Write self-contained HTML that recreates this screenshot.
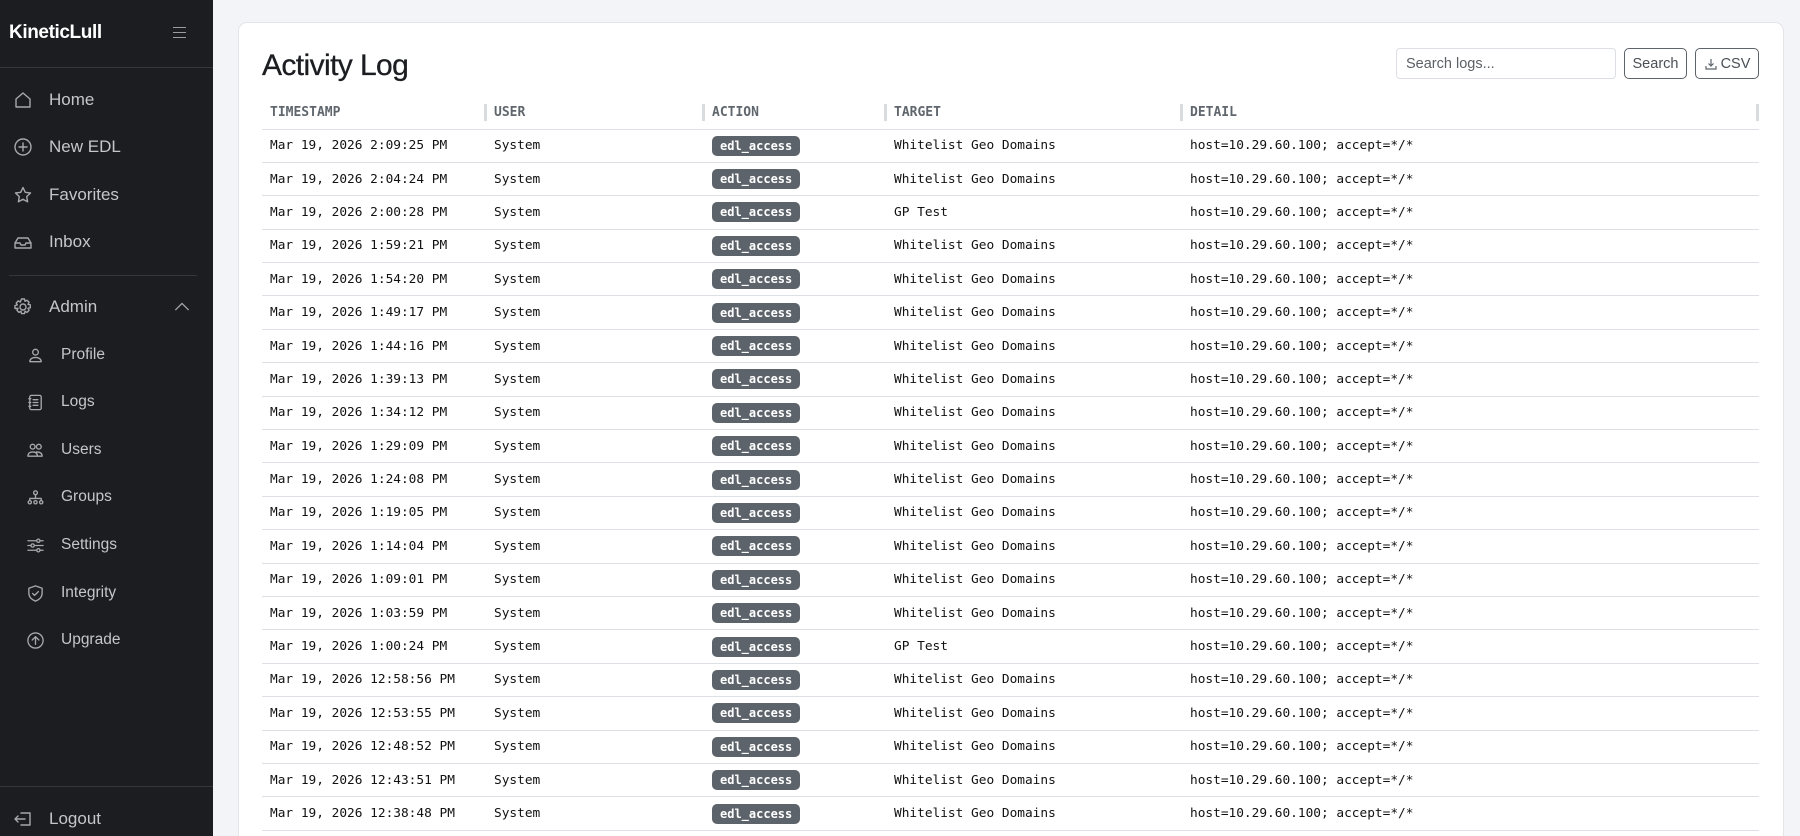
<!DOCTYPE html>
<html><head><meta charset="utf-8"><style>
*{box-sizing:border-box;margin:0;padding:0}
html{width:1800px;height:836px;overflow:hidden}
body{width:1800px;height:836px;overflow:hidden;background:#f3f4f8;font-family:"Liberation Sans",sans-serif;position:relative}
.sb{position:absolute;left:0;top:0;width:213px;height:836px;background:#1b1d21;color:#c4c6ca}
.brand{position:absolute;left:9px;top:22px;color:#fff;font-weight:bold;font-size:19px;letter-spacing:-0.4px}
.ham{position:absolute;left:173px;top:27px;width:13px;height:11px;border-top:1.5px solid #9a9ca0;border-bottom:1.5px solid #9a9ca0}
.ham:after{content:"";position:absolute;left:0;right:0;top:3.5px;border-top:1.5px solid #9a9ca0}
.hr{position:absolute;left:0;width:213px;border-top:1px solid #33363b}
.it{position:absolute;left:0;height:24px;display:flex;align-items:center;font-size:17px;color:#c4c6ca}
.it svg{position:absolute;fill:none;stroke:#a6a8ac;stroke-width:1.4;stroke-linecap:round;stroke-linejoin:round}
.it span{position:absolute;white-space:nowrap}
.m svg{left:13px;width:20px;height:20px}.m span{left:49px}
.s{font-size:15.5px}.s svg{left:26px;width:19px;height:19px}.s span{left:61px}
.card{position:absolute;left:238px;top:22px;width:1546px;height:840px;background:#fff;border:1px solid #e3e5e9;border-radius:9px}
h1{position:absolute;left:262px;top:49px;font-size:30px;font-weight:normal;color:#1b1d21;letter-spacing:-0.6px;-webkit-text-stroke:0.3px #1b1d21}
.inp{position:absolute;left:1396px;top:48px;width:220px;height:31px;border:1px solid #dcdfe3;border-radius:4px;font-size:14.5px;color:#5c6166;padding:7px 9px}
.btn{position:absolute;top:48px;height:31px;border:1px solid #5c636a;border-radius:5px;font-size:14.5px;color:#4a5056;display:flex;align-items:center;justify-content:center}
table{position:absolute;left:262px;top:97px;width:1497px;border-collapse:collapse;font-family:"DejaVu Sans Mono","Liberation Mono",monospace;font-size:12.8px;color:#111}
th{height:32px;text-align:left;font-weight:bold;color:#5f666d;padding-left:8px;border-bottom:1.5px solid #dde0e4;position:relative;font-size:13px}
th i{position:absolute;left:-2px;top:7px;height:17px;border-left:3px solid #d9dcdf}
td{height:33.4px;padding-left:8px;border-bottom:1px solid #dde0e4;white-space:nowrap}
.b{display:inline-block;background:#5c636a;color:#fff;font-weight:bold;font-size:12px;border-radius:5px;padding:3px 8px 3px;line-height:14px}
</style></head><body>
<div class="sb">
<div class="brand">KineticLull</div><div class="ham"></div>
<div class="hr" style="top:67px"></div>
<div class="it m" style="top:88px"><svg viewBox="0 0 20 20"><path d="M3 9 L10 3 L17 9 V17 H3 Z"/></svg><span>Home</span></div>
<div class="it m" style="top:135px"><svg viewBox="0 0 20 20"><circle cx="10" cy="10" r="8"/><path d="M10 6v8M6 10h8"/></svg><span>New EDL</span></div>
<div class="it m" style="top:183px"><svg viewBox="0 0 20 20"><path d="M10 2.5l2.3 4.8 5.2.7-3.8 3.6.9 5.2L10 14.3l-4.6 2.5.9-5.2L2.5 8l5.2-.7z"/></svg><span>Favorites</span></div>
<div class="it m" style="top:230px"><svg viewBox="0 0 20 20"><path d="M2 11l3-5h10l3 5v5H2z M2 11h5l1 2h4l1-2h5"/></svg><span>Inbox</span></div>
<div class="hr" style="top:275px;left:9px;width:188px"></div>
<div class="it m" style="top:295px"><svg viewBox="0 0 20 20"><circle cx="10" cy="10" r="3"/><path d="M8.5 2h3l.5 2.3 2-1.1 2.1 2.1-1.1 2 2.3.5v3l-2.3.5 1.1 2-2.1 2.1-2-1.1-.5 2.3h-3l-.5-2.3-2 1.1-2.1-2.1 1.1-2L2 11.5v-3l2.3-.5-1.1-2 2.1-2.1 2 1.1z"/></svg><span>Admin</span><svg viewBox="0 0 20 20" style="left:173px;width:18px;height:18px"><path d="M3 13l7-7 7 7"/></svg></div>
<div class="it s" style="top:343px"><svg viewBox="0 0 20 20"><circle cx="10" cy="6.5" r="3"/><path d="M4 16.5c0-3 3-4.5 6-4.5s6 1.5 6 4.5z"/></svg><span>Profile</span></div>
<div class="it s" style="top:390px"><svg viewBox="0 0 20 20"><rect x="4" y="2.5" width="12" height="15" rx="1.5"/><path d="M7.5 7h5M7.5 10h5M7.5 13h5M3 6h2M3 10h2M3 14h2"/></svg><span>Logs</span></div>
<div class="it s" style="top:438px"><svg viewBox="0 0 20 20"><circle cx="7" cy="6" r="2.5"/><circle cx="13.5" cy="6" r="2.5"/><path d="M2 16c0-3 2-4.5 5-4.5s5 1.5 5 4.5zM11 11.5c3 0 6 1 6 4.5h-4"/></svg><span>Users</span></div>
<div class="it s" style="top:485px"><svg viewBox="0 0 20 20"><circle cx="10" cy="5" r="2"/><circle cx="4" cy="15" r="1.7"/><circle cx="10" cy="15" r="1.7"/><circle cx="16" cy="15" r="1.7"/><path d="M10 7v4M4 13v-2h12v2"/></svg><span>Groups</span></div>
<div class="it s" style="top:533px"><svg viewBox="0 0 20 20"><path d="M2 5h16M2 10h16M2 15h16"/><circle cx="13" cy="5" r="1.7" fill="#1b1d21"/><circle cx="7" cy="10" r="1.7" fill="#1b1d21"/><circle cx="13" cy="15" r="1.7" fill="#1b1d21"/></svg><span>Settings</span></div>
<div class="it s" style="top:581px"><svg viewBox="0 0 20 20"><path d="M10 2l7 2.5v5c0 4-3 7-7 8.5-4-1.5-7-4.5-7-8.5v-5z M7 10l2 2 4-4"/></svg><span>Integrity</span></div>
<div class="it s" style="top:628px"><svg viewBox="0 0 20 20"><circle cx="10" cy="10" r="8"/><path d="M10 14V6M6.5 9.5L10 6l3.5 3.5"/></svg><span>Upgrade</span></div>
<div class="hr" style="top:786px"></div>
<div class="it m" style="top:807px"><svg viewBox="0 0 20 20"><path d="M8 4h9v12H8 M12 10H2 M5 7l-3 3 3 3"/></svg><span>Logout</span></div>
</div>
<div class="card"></div>
<h1>Activity Log</h1>
<div class="inp">Search logs...</div>
<div class="btn" style="left:1624px;width:63px">Search</div>
<div class="btn" style="left:1695px;width:64px"><svg width="14" height="14" viewBox="0 0 14 14" style="margin-right:3px" fill="none" stroke="#5c636a" stroke-width="1.2"><path d="M7 2v7M4.5 6.5L7 9l2.5-2.5M2 9v3h10V9"/></svg>CSV</div>
<table>
<tr><th style="width:224px">TIMESTAMP</th><th style="width:218px"><i></i>USER</th><th style="width:182px"><i></i>ACTION</th><th style="width:296px"><i></i>TARGET</th><th><i></i>DETAIL<i style="left:auto;right:0"></i></th></tr>
<tr><td>Mar 19, 2026 2:09:25 PM</td><td>System</td><td><span class="b">edl_access</span></td><td>Whitelist Geo Domains</td><td>host=10.29.60.100; accept=*/*</td></tr>
<tr><td>Mar 19, 2026 2:04:24 PM</td><td>System</td><td><span class="b">edl_access</span></td><td>Whitelist Geo Domains</td><td>host=10.29.60.100; accept=*/*</td></tr>
<tr><td>Mar 19, 2026 2:00:28 PM</td><td>System</td><td><span class="b">edl_access</span></td><td>GP Test</td><td>host=10.29.60.100; accept=*/*</td></tr>
<tr><td>Mar 19, 2026 1:59:21 PM</td><td>System</td><td><span class="b">edl_access</span></td><td>Whitelist Geo Domains</td><td>host=10.29.60.100; accept=*/*</td></tr>
<tr><td>Mar 19, 2026 1:54:20 PM</td><td>System</td><td><span class="b">edl_access</span></td><td>Whitelist Geo Domains</td><td>host=10.29.60.100; accept=*/*</td></tr>
<tr><td>Mar 19, 2026 1:49:17 PM</td><td>System</td><td><span class="b">edl_access</span></td><td>Whitelist Geo Domains</td><td>host=10.29.60.100; accept=*/*</td></tr>
<tr><td>Mar 19, 2026 1:44:16 PM</td><td>System</td><td><span class="b">edl_access</span></td><td>Whitelist Geo Domains</td><td>host=10.29.60.100; accept=*/*</td></tr>
<tr><td>Mar 19, 2026 1:39:13 PM</td><td>System</td><td><span class="b">edl_access</span></td><td>Whitelist Geo Domains</td><td>host=10.29.60.100; accept=*/*</td></tr>
<tr><td>Mar 19, 2026 1:34:12 PM</td><td>System</td><td><span class="b">edl_access</span></td><td>Whitelist Geo Domains</td><td>host=10.29.60.100; accept=*/*</td></tr>
<tr><td>Mar 19, 2026 1:29:09 PM</td><td>System</td><td><span class="b">edl_access</span></td><td>Whitelist Geo Domains</td><td>host=10.29.60.100; accept=*/*</td></tr>
<tr><td>Mar 19, 2026 1:24:08 PM</td><td>System</td><td><span class="b">edl_access</span></td><td>Whitelist Geo Domains</td><td>host=10.29.60.100; accept=*/*</td></tr>
<tr><td>Mar 19, 2026 1:19:05 PM</td><td>System</td><td><span class="b">edl_access</span></td><td>Whitelist Geo Domains</td><td>host=10.29.60.100; accept=*/*</td></tr>
<tr><td>Mar 19, 2026 1:14:04 PM</td><td>System</td><td><span class="b">edl_access</span></td><td>Whitelist Geo Domains</td><td>host=10.29.60.100; accept=*/*</td></tr>
<tr><td>Mar 19, 2026 1:09:01 PM</td><td>System</td><td><span class="b">edl_access</span></td><td>Whitelist Geo Domains</td><td>host=10.29.60.100; accept=*/*</td></tr>
<tr><td>Mar 19, 2026 1:03:59 PM</td><td>System</td><td><span class="b">edl_access</span></td><td>Whitelist Geo Domains</td><td>host=10.29.60.100; accept=*/*</td></tr>
<tr><td>Mar 19, 2026 1:00:24 PM</td><td>System</td><td><span class="b">edl_access</span></td><td>GP Test</td><td>host=10.29.60.100; accept=*/*</td></tr>
<tr><td>Mar 19, 2026 12:58:56 PM</td><td>System</td><td><span class="b">edl_access</span></td><td>Whitelist Geo Domains</td><td>host=10.29.60.100; accept=*/*</td></tr>
<tr><td>Mar 19, 2026 12:53:55 PM</td><td>System</td><td><span class="b">edl_access</span></td><td>Whitelist Geo Domains</td><td>host=10.29.60.100; accept=*/*</td></tr>
<tr><td>Mar 19, 2026 12:48:52 PM</td><td>System</td><td><span class="b">edl_access</span></td><td>Whitelist Geo Domains</td><td>host=10.29.60.100; accept=*/*</td></tr>
<tr><td>Mar 19, 2026 12:43:51 PM</td><td>System</td><td><span class="b">edl_access</span></td><td>Whitelist Geo Domains</td><td>host=10.29.60.100; accept=*/*</td></tr>
<tr><td>Mar 19, 2026 12:38:48 PM</td><td>System</td><td><span class="b">edl_access</span></td><td>Whitelist Geo Domains</td><td>host=10.29.60.100; accept=*/*</td></tr>
</table>
</body></html>
